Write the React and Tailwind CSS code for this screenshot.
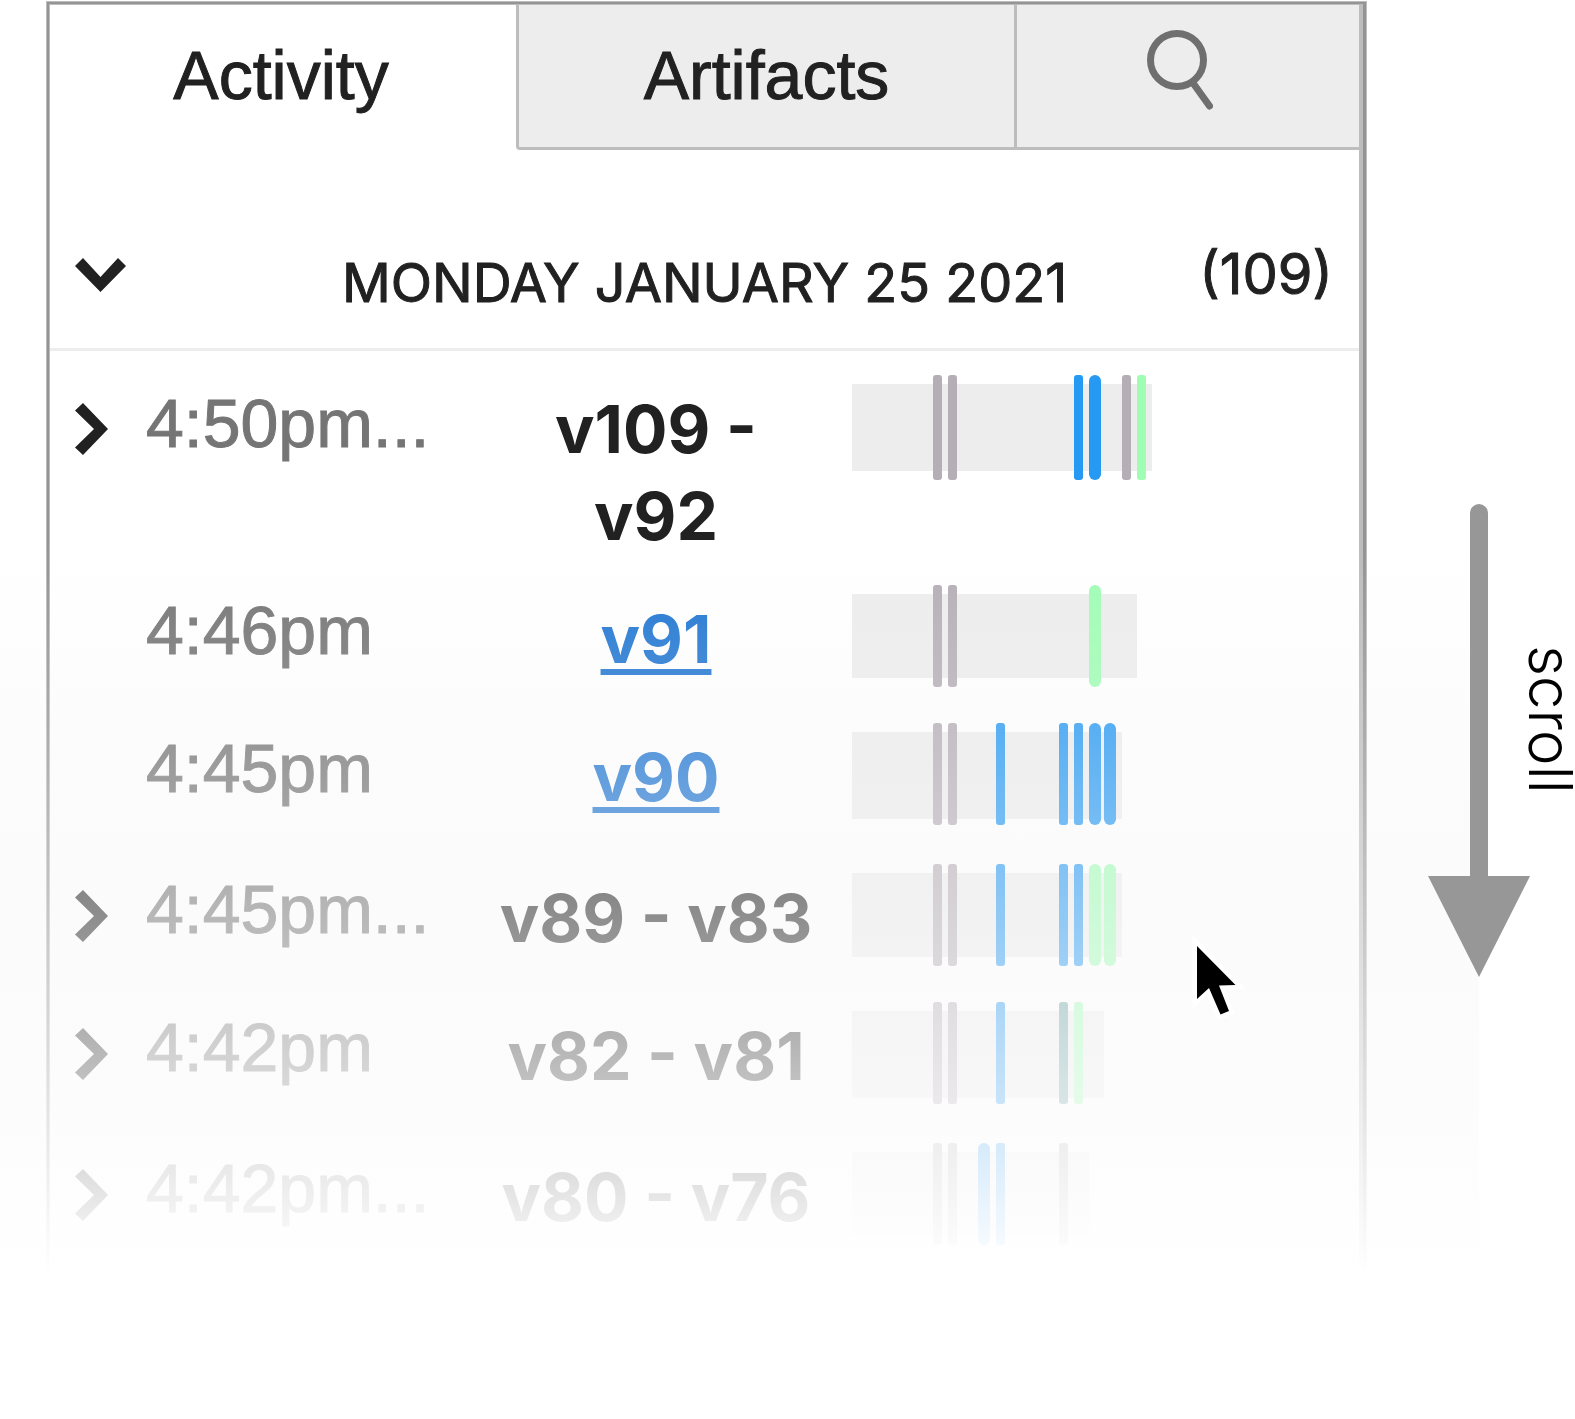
import React from "react";

const TONES = {
  gray: "bg-[#b5aeb6]",
  blue: "bg-[#2699f3]",
  green: "bg-[#9ffdb4]",
  teal: "bg-[#689fa3]",
};

const G = "gray";
const B = "blue";

/* marks: [offset, tone, wide] */
const ROWS = [
  {
    time: "4:50pm...",
    version: "v109 - v92",
    group: true,
    length: 300,
    marks: [[81, G], [96, G], [222, B], [237, B, true], [270, G], [285, "green"]],
  },
  { time: "4:46pm", version: "v91", length: 285, marks: [[81, G], [96, G], [237, "green", true]] },
  {
    time: "4:45pm",
    version: "v90",
    length: 270,
    marks: [[81, G], [96, G], [144, B], [207, B], [222, B], [237, B, true], [252, B, true]],
  },
  {
    time: "4:45pm...",
    version: "v89 - v83",
    group: true,
    length: 270,
    marks: [[81, G], [96, G], [144, B], [207, B], [222, B], [237, "green", true], [252, "green", true]],
  },
  {
    time: "4:42pm",
    version: "v82 - v81",
    group: true,
    length: 252,
    marks: [[81, G], [96, G], [144, B], [207, "teal"], [222, "green"]],
  },
  {
    time: "4:42pm...",
    version: "v80 - v76",
    group: true,
    length: 237,
    marks: [[81, G], [96, G], [126, B, true], [144, B], [207, G]],
  },
];

function ChevronRight() {
  return (
    <svg width="33" height="52" viewBox="0 0 33 52" fill="#212121" aria-hidden="true">
      <path d="M8 0 33 26 8 52 0 44.500 19 26 0 7.500Z" />
    </svg>
  );
}

function ChevronDown() {
  return (
    <svg width="51" height="34" viewBox="0 0 51 34" fill="#212121" aria-hidden="true">
      <path d="M8 0 25.500 19 43 0 51 8 25.500 34 0 8Z" />
    </svg>
  );
}

function SearchIcon() {
  return (
    <svg width="66" height="80" viewBox="0 0 66 80" fill="none" stroke="#6f6f6f" aria-hidden="true">
      <circle cx="30" cy="30" r="26.500" strokeWidth="7" />
      <path d="M46 53 62.500 76" strokeWidth="7" strokeLinecap="round" />
    </svg>
  );
}

function Timeline({ length, marks }) {
  return (
    <div className="relative ml-9 h-[102px] group-first:h-[105px]">
      <div
        className="absolute top-[9px] bottom-[9px] left-0 bg-[#ededed] group-odd:bottom-[6px] group-first:bottom-[9px]!"
        style={{ width: length }}
      />
      {marks.map(([offset, tone, wide]) => (
        <span
          key={offset}
          className={`absolute inset-y-0 ${wide ? "w-3 rounded-full" : "w-[9px] rounded-[3px]"} ${TONES[tone]}`}
          style={{ left: offset }}
        />
      ))}
    </div>
  );
}

function Row({ row }) {
  return (
    <li className="group grid grid-cols-[96px_minmax(0,1fr)_320px_543px] items-start even:h-[138px] odd:h-[141px] first:h-[210px]!">
      {row.group ? (
        <button type="button" aria-label={`Expand ${row.version}`} className="mt-[26px] ml-[25px] w-[33px] group-first:mt-7">
          <ChevronRight />
        </button>
      ) : (
        <span />
      )}
      <span className="whitespace-nowrap pt-px font-['Liberation_Sans',sans-serif] text-[68px] leading-[88px] text-[#757575] [-webkit-text-stroke:1px_currentColor] group-first:pt-1">
        {row.time}
      </span>
      <div className="pt-[11px] text-center text-[66px] leading-[87px] font-bold text-[#212121]">
        {row.group ? (
          row.version
        ) : (
          <a
            href={`#${row.version}`}
            className="text-[#2076d2] underline decoration-[6px] underline-offset-[6px] [text-decoration-skip-ink:none]"
          >
            {row.version}
          </a>
        )}
      </div>
      <Timeline length={row.length} marks={row.marks} />
    </li>
  );
}

export default function App() {
  return (
    <div className="relative flex min-h-screen items-start overflow-hidden bg-white pt-px pl-[46px] font-['Inter',sans-serif] text-[#212121]">
      <section className="min-w-0 flex-1 border border-b-0 border-[#bdbdbd]">
        <div className="border-x-2 border-t-2 border-[#949494] border-r-[3px]">
          <div className="border-t border-r-4 border-l border-[#bdbdbd] pb-9">
            <div
              role="tablist"
              className="grid h-[145px] grid-cols-[466fr_498fr_345fr] font-['Liberation_Sans',sans-serif] text-[68px] leading-[88px] [-webkit-text-stroke:1px_currentColor]"
            >
              <button type="button" role="tab" aria-selected="true" className="flex justify-center pt-[26px] pr-1">
                Activity
              </button>
              <button
                type="button"
                role="tab"
                aria-selected="false"
                className="flex justify-center rounded-bl-[4px] border-b-[3px] border-l-[3px] border-[#bdbdbd] bg-[#ededed] pt-[26px]"
              >
                Artifacts
              </button>
              <button
                type="button"
                role="tab"
                aria-selected="false"
                aria-label="Search"
                className="flex justify-center border-b-[3px] border-l-[3px] border-[#bdbdbd] bg-[#ededed] pt-[25px] pr-4"
              >
                <SearchIcon />
              </button>
            </div>

            <div className="grid h-[201px] grid-cols-[200px_minmax(0,1fr)_200px] border-b-[3px] border-[#ededed] leading-[72px] [-webkit-text-stroke:1px_currentColor]">
              <button type="button" aria-label="Collapse day" className="mt-[108px] ml-[25px] h-[34px] w-[51px]">
                <ChevronDown />
              </button>
              <h2 className="pt-[97px] text-center text-[54px] whitespace-nowrap uppercase">Monday January 25 2021</h2>
              <span className="pt-[88px] pr-[26px] text-right text-[56px]">(109)</span>
            </div>

            <ul className="pt-6">
              {ROWS.map((row) => (
                <Row key={row.version} row={row} />
              ))}
            </ul>
          </div>
        </div>
      </section>

      <aside className="z-10 flex w-[208px] shrink-0 items-start pt-[503px] pl-[61px]">
        <svg width="102" height="473" viewBox="0 0 102 473" fill="#979797" className="shrink-0" aria-hidden="true">
          <path d="M42 9a9 9 0 0 1 18 0V372H102L51 473 0 372H42Z" />
        </svg>
        <span className="mt-[141px] -ml-[3px] text-[60px] leading-[48px] font-light text-black [writing-mode:vertical-rl]">
          scroll
        </span>
      </aside>

      <div className="pointer-events-none absolute top-[548px] right-24 left-0 h-[727px] bg-[linear-gradient(to_bottom,rgba(239,239,239,0),rgba(243,243,243,0.25),rgba(247,247,247,0.5),rgba(251,251,251,0.75),#ffffff)]" />
      <div className="pointer-events-none absolute top-[1275px] right-24 left-0 h-36 bg-white" />

      <svg
        width="70"
        height="100"
        viewBox="0 0 70 100"
        className="pointer-events-none absolute top-[926px] left-[1187px]"
        aria-hidden="true"
      >
        <path
          d="M10 20V73L22 62 33.500 88.500 42 85 32 59.500 48.500 59Z"
          fill="#000"
          stroke="#fff"
          strokeWidth="9"
          strokeMiterlimit="10"
          style={{ paintOrder: "stroke" }}
        />
      </svg>
    </div>
  );
}
